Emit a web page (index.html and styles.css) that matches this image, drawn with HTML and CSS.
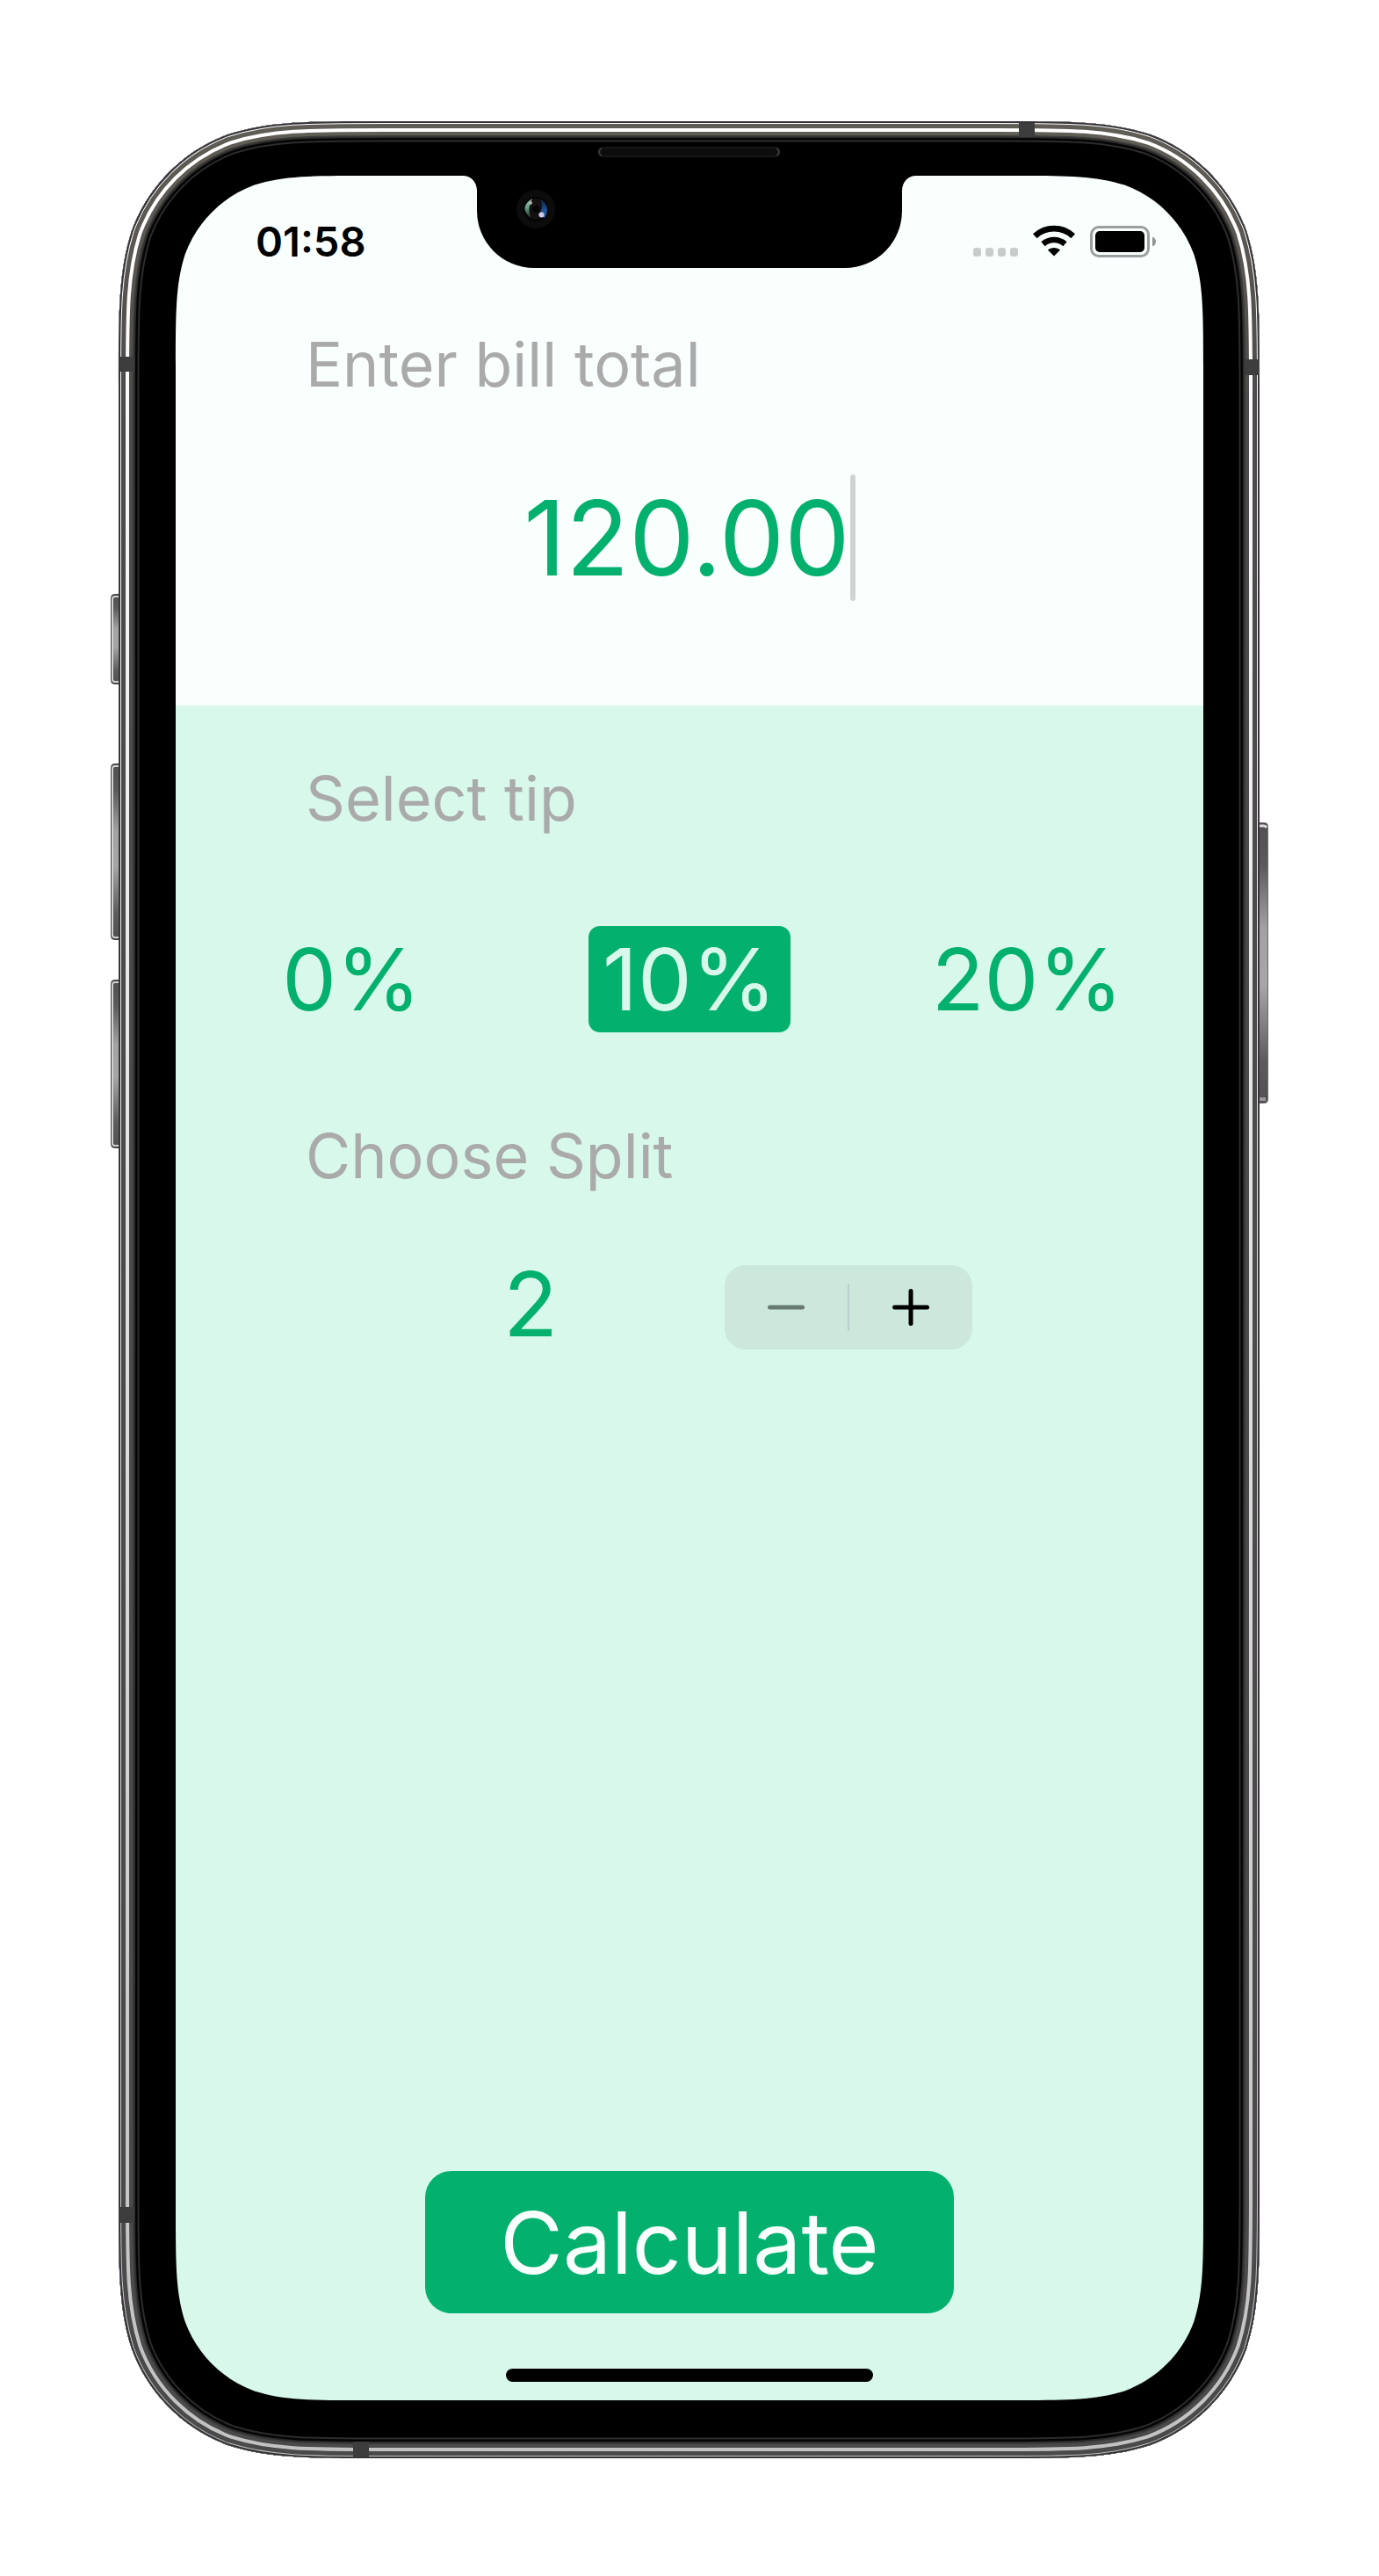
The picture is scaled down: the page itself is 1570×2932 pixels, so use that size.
FILE: index.html
```html
<!DOCTYPE html>
<html lang="en">
<head>
  <meta charset="utf-8">
  <meta name="viewport" content="width=device-width, initial-scale=1">
  <title>Tip calculator</title>
  <link rel="stylesheet" href="styles.css">
</head>
<body>
  <main class="stage">
    <div class="phone">
      <form class="screen">
        <section class="bill">
          <header class="status">
            <time class="clock">01:58</time>
            <svg class="status-icons" viewBox="0 0 210 37" aria-hidden="true">
              <g fill="#c8cccb">
                <rect x="1" y="26" width="9" height="10" rx="3"/>
                <rect x="15" y="26" width="9" height="10" rx="3"/>
                <rect x="29" y="26" width="9" height="10" rx="3"/>
                <rect x="43" y="26" width="9" height="10" rx="3"/>
              </g>
              <path d="M93 35.500L85.900 28.500C89.900 25.100 96.100 25.100 100.100 28.500Z"/>
              <path d="M80.500 21.700C87.600 15.400 98.400 15.400 105.500 21.700" fill="none" stroke="#000" stroke-width="6.500"/>
              <path d="M71.300 12.700C83.500 1.300 102.500 1.300 114.700 12.700" fill="none" stroke="#000" stroke-width="6.800"/>
              <rect x="135.500" y="2.500" width="65" height="33" rx="8.500" fill="none" stroke="#9b9f9e" stroke-width="3"/>
              <rect x="140" y="7" width="56" height="24" rx="5"/>
              <path d="M205 13.500C210.300 15.500 210.300 22.500 205 24.500Z" fill="#8f9392"/>
            </svg>
          </header>
          <label class="label" for="bill">Enter bill total</label>
          <div class="amount">
            <input class="amount-input" id="bill" type="text" inputmode="decimal" value="120.00" size="6">
            <span class="caret"></span>
          </div>
        </section>

        <section class="options">
          <h2 class="label">Select tip</h2>
          <div class="tips">
            <button class="tip" type="button" aria-pressed="false">0%</button>
            <button class="tip tip-selected" type="button" aria-pressed="true">10%</button>
            <button class="tip" type="button" aria-pressed="false">20%</button>
          </div>
          <h2 class="label">Choose Split</h2>
          <div class="split">
            <output class="split-value">2</output>
            <div class="stepper">
              <button class="step step-off" type="button" aria-label="Fewer people">
                <svg class="step-icon" viewBox="0 0 42 42"><path d="M2.500 21H39.500"/></svg>
              </button>
              <span class="step-divider"></span>
              <button class="step" type="button" aria-label="More people">
                <svg class="step-icon" viewBox="0 0 42 42"><path d="M2.500 21H39.500M21 2.500V39.500"/></svg>
              </button>
            </div>
          </div>
          <button class="calculate" type="button">Calculate</button>
          <span class="home-bar"></span>
        </section>
      </form>

      <svg class="frame" viewBox="0 0 1318 2660" preserveAspectRatio="none" aria-hidden="true">
        <defs>
          <path id="body" d="M9 302.700c0-87.200 0-130.800 14.800-177.700c18.700-51.200 59-91.500 110.200-110.200c46.900-14.800 90.500-14.800 177.700-14.800h693.600c87.200 0 130.800 0 177.700 14.800c51.200 18.700 91.500 59 110.200 110.200c14.800 46.900 14.800 90.500 14.800 177.700v2054.600c0 87.200 0 130.800-14.800 177.700c-18.700 51.200-59 91.500-110.200 110.200c-46.900 14.800-90.500 14.800-177.700 14.800h-693.600c-87.200 0-130.800 0-177.700-14.800c-51.200-18.700-91.500-59-110.200-110.200c-14.800-46.900-14.800-90.500-14.800-177.700z"/>
          <clipPath id="bodyClip"><use href="#body"/></clipPath>
          <linearGradient id="shine" gradientUnits="userSpaceOnUse" x1="0" y1="0" x2="0" y2="2660">
            <stop offset="0" stop-color="#fff"/><stop offset=".15" stop-color="#f8f8f8"/><stop offset=".9" stop-color="#c6c6c6"/><stop offset="1" stop-color="#c2c2c2"/>
          </linearGradient>
          <linearGradient id="steel" gradientUnits="userSpaceOnUse" x1="0" y1="0" x2="0" y2="2660">
            <stop offset="0" stop-color="#605d56"/><stop offset=".05" stop-color="#5a5651"/><stop offset=".12" stop-color="#4b4b4b"/><stop offset="1" stop-color="#4a4a4a"/>
          </linearGradient>
          <linearGradient id="button" x1="0" y1="0" x2="0" y2="1">
            <stop offset="0" stop-color="#505050"/><stop offset=".15" stop-color="#5a5a5a"/><stop offset=".38" stop-color="#a2a2a2"/><stop offset=".58" stop-color="#a6a6a6"/><stop offset=".85" stop-color="#5c5c5c"/><stop offset="1" stop-color="#505050"/>
          </linearGradient>
          <linearGradient id="glassL" x1="0" y1="0" x2="0" y2="1">
            <stop offset="0" stop-color="#a9c4b6"/><stop offset=".5" stop-color="#5f9c80"/><stop offset="1" stop-color="#1d3329"/>
          </linearGradient>
          <linearGradient id="glassR" x1="0" y1="0" x2="0" y2="1">
            <stop offset="0" stop-color="#0b1d38"/><stop offset=".6" stop-color="#1d5296"/><stop offset="1" stop-color="#2b5fa8"/>
          </linearGradient>
        </defs>

        <g fill="url(#button)" stroke="#3f3f3f">
          <rect x=".5" y="538.500" width="16" height="102" rx="4"/>
          <rect x=".5" y="731.500" width="16" height="200" rx="4"/>
          <rect x=".5" y="977.500" width="16" height="191" rx="4"/>
          <rect x="1301.500" y="798.500" width="16" height="319" rx="4" stroke="#6a6a6a"/>
        </g>
        <path d="M9 541H5Q2 541 2 544V635Q2 638 5 638H9M9 734H5Q2 734 2 737V926Q2 929 5 929H9M9 980H5Q2 980 2 983V1163Q2 1166 5 1166H9" fill="none" stroke="#d0d0d0" stroke-width="2"/>
        <path d="M1308 802H1313Q1315 802 1316 804" fill="none" stroke="#ddd" stroke-width="3"/>
        <path d="M1308 1113H1315" stroke="#999" stroke-width="4"/>

        <path fill-rule="evenodd" d="M9 302.700c0-87.200 0-130.800 14.800-177.700c18.700-51.200 59-91.500 110.200-110.200c46.900-14.800 90.500-14.800 177.700-14.800h693.600c87.200 0 130.800 0 177.700 14.800c51.200 18.700 91.500 59 110.200 110.200c14.800 46.900 14.800 90.500 14.800 177.700v2054.600c0 87.200 0 130.800-14.800 177.700c-18.700 51.200-59 91.500-110.200 110.200c-46.900 14.800-90.500 14.800-177.700 14.800h-693.600c-87.200 0-130.800 0-177.700-14.800c-51.200-18.700-91.500-59-110.200-110.200c-14.800-46.900-14.800-90.500-14.800-177.700z
          M74 279.100c0-62.500 0-93.800 10.600-127.400c13.400-36.800 42.300-65.700 79.100-79.100c33.600-10.600 64.900-10.600 127.400-10.600H401c9 0 16 7 16 17V102a65 65 0 0 0 65 65H836a65 65 0 0 0 65-65V79c0-10 7-17 16-17H1026.900c62.500 0 93.800 0 127.400 10.600c36.800 13.400 65.700 42.300 79.100 79.100c10.600 33.600 10.600 64.900 10.600 127.400v2097.800c0 62.500 0 93.800-10.600 127.400c-13.400 36.800-42.300 65.700-79.100 79.100c-33.600 10.600-64.900 10.600-127.400 10.600H291.100c-62.500 0-93.800 0-127.400-10.600c-36.800-13.400-65.700-42.300-79.100-79.100c-10.600-33.600-10.600-64.900-10.600-127.400z"/>

        <g clip-path="url(#bodyClip)" fill="none">
          <use href="#body" stroke="#2c2c2c" stroke-width="47"/>
          <use href="#body" stroke="#050505" stroke-width="43"/>
          <use href="#body" stroke="#2b2b2a" stroke-width="38"/>
          <use href="#body" stroke="#3c3b39" stroke-width="35"/>
          <use href="#body" stroke="url(#steel)" stroke-width="32"/>
          <use href="#body" stroke="url(#shine)" stroke-width="24"/>
          <use href="#body" stroke="url(#steel)" stroke-width="16"/>
          <use href="#body" stroke="url(#shine)" stroke-width="6"/>
          <use href="#body" stroke="#363438" stroke-width="4"/>
        </g>
        <g fill="#3d3d3d">
          <rect x="10" y="268" width="17" height="17"/>
          <rect x="10" y="2374" width="17" height="18"/>
          <rect x="1291" y="271" width="16" height="18"/>
          <rect x="1034" y="2" width="18" height="16"/>
          <rect x="276" y="2641" width="18" height="17"/>
        </g>

        <rect x="556" y="30" width="205" height="10" rx="5" fill="#0d0d0d" stroke="#161616" stroke-width="2"/>
        <path d="M559 31Q556 32 556 35T559 39M758 31Q761 32 761 35T758 39" fill="none" stroke="#383838" stroke-width="2"/>
        <circle cx="484" cy="100" r="22" fill="#0c0c0c"/>
        <circle cx="484" cy="100" r="14" fill="#030303"/>
        <circle cx="484" cy="100" r="12" fill="#151112"/>
        <path d="M480 88Q464 98 478 110Q474 98 480 88Z" fill="url(#glassL)"/>
        <path d="M489 88Q502 97 494 110L487 107Q494 99 489 88Z" fill="url(#glassR)"/>
        <circle cx="484" cy="100" r="4" fill="#050505"/>
        <circle cx="478" cy="93" r="2" fill="#a9b5ae"/>
        <circle cx="490.500" cy="106.500" r="3" fill="#cfcbe6"/>
      </svg>
    </div>
  </main>
</body>
</html>
```
FILE: styles.css
```css
:root {
  --green: #03b06d;
  --mint: #d7f8ea;
  --white: #f9fffd;
  --gray: #aaaaaa;
}

* {
  box-sizing: border-box;
}

body {
  margin: 0;
  background: #fff;
  font-family: Inter, "Liberation Sans", sans-serif;
}

button,
input {
  margin: 0;
  padding: 0;
  border: 0;
  background: none;
  color: inherit;
  font: inherit;
}

button {
  cursor: pointer;
}

.stage {
  display: flex;
  justify-content: center;
  padding: 138px 24px 134px;
}

.phone {
  position: relative;
  width: 100%;
  max-width: 1318px;
  padding: 62px 74px 66px;
}

.frame {
  position: absolute;
  inset: 0;
  width: 100%;
  height: 100%;
  pointer-events: none;
}

.screen {
  display: flex;
  flex-direction: column;
  aspect-ratio: 1170 / 2532;
  border-radius: 120px;
  overflow: hidden;
  background: var(--mint);
}

.bill {
  padding-bottom: 119px;
  background: var(--white);
}

.status {
  display: flex;
  align-items: center;
  justify-content: space-between;
  height: 148px;
  margin-bottom: 22px;
  padding: 0 53px 0 91px;
}

.clock {
  font-size: 47px;
  font-weight: 600;
}

.status-icons {
  width: 210px;
  height: 37px;
}

.label {
  display: block;
  margin: 0;
  padding: 0 148px;
  color: var(--gray);
  font-size: 70px;
  font-weight: 400;
  line-height: 90px;
}

.amount {
  display: flex;
  justify-content: center;
  margin-top: 80px;
  color: var(--green);
}

.amount-input {
  field-sizing: content;
  height: 144px;
  font-size: 118px;
  text-align: center;
  outline: 0;
}

.caret {
  width: 6px;
  border-radius: 3px;
  background: #cfd4d2;
}

.options {
  flex: 1;
  display: flex;
  flex-direction: column;
  padding: 61px 0 21px;
}

.tips {
  display: grid;
  grid-template-columns: repeat(3, 1fr);
  justify-items: center;
  margin: 100px 8px 96px;
}

.tip {
  height: 121px;
  padding: 0 16px;
  border-radius: 13px;
  color: var(--green);
  font-size: 98px;
}

.tip-selected {
  background: var(--green);
  color: var(--mint);
}

.split {
  display: flex;
  align-items: center;
  justify-content: center;
  gap: 80px;
  margin-top: 67px;
}

.split-value {
  width: 282px;
  padding-bottom: 8px;
  color: var(--green);
  font-size: 102px;
  line-height: 112px;
  text-align: center;
}

.stepper {
  display: flex;
  align-items: center;
  width: 282px;
  height: 96px;
  border-radius: 24px;
  background: #cce8dc;
}

.step {
  flex: 1;
  display: flex;
  align-items: center;
  justify-content: center;
  height: 100%;
  color: #000;
}

.step-off {
  color: #667a70;
}

.step-divider {
  width: 2px;
  height: 54px;
  background: #b9d1ca;
}

.step-icon {
  width: 42px;
  height: 42px;
  fill: none;
  stroke: currentColor;
  stroke-width: 5;
  stroke-linecap: round;
}

.calculate {
  align-self: center;
  width: 602px;
  max-width: 90%;
  height: 162px;
  margin-top: auto;
  border-radius: 30px;
  background: var(--green);
  color: var(--white);
  font-size: 98px;
}

.home-bar {
  align-self: center;
  width: 418px;
  max-width: 60%;
  height: 15px;
  margin-top: 63px;
  border-radius: 8px;
  background: #000;
}
```
